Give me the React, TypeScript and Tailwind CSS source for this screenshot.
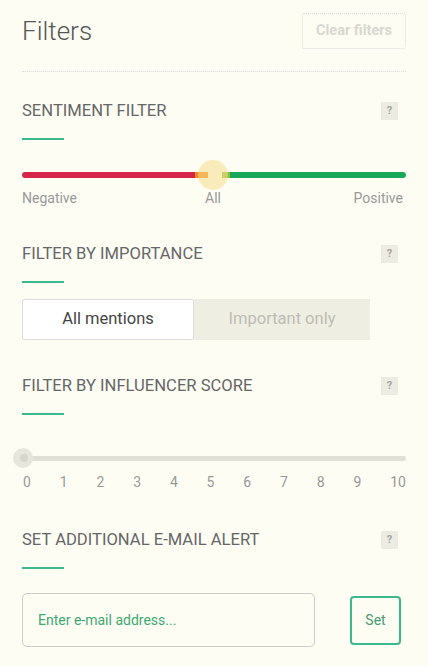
import React from 'react'

const font = { fontFamily: 'Roboto, "Noto Sans", Arial, sans-serif' }

function SectionHead({ title }: { title: string }) {
  return (
    <div>
      <div className="flex h-[20px] items-center justify-between">
        <span className="text-[16.6px] leading-[20px] text-[#666]">{title}</span>
        <span className="mr-[8px] flex h-[18px] w-[17px] items-center justify-center bg-[#ececE2] text-[11px] font-bold text-[#a5a5a0]">?</span>
      </div>
      <div className="mt-[17px] h-[2px] w-[42px] bg-[#3cb88e]" />
    </div>
  )
}

const scores = ['0', '1', '2', '3', '4', '5', '6', '7', '8', '9', '10']

export default function App() {
  return (
    <div className="min-h-[666px] w-[428px] bg-[#fdfdf4] px-[22px] pt-[13px]" style={font}>
      {/* Header */}
      <div className="flex h-[36px] items-center justify-between">
        <h1 className="text-[26px] font-light leading-none text-[#555]">Filters</h1>
        <button className="h-[36px] w-[104px] rounded-[2px] border border-dotted border-[#ddd] text-[14.5px] font-bold text-[#d8d8d0]">
          Clear filters
        </button>
      </div>
      <div className="mt-[22px] border-t border-dotted border-[#ddd]" />

      {/* Sentiment */}
      <div className="mt-[29px]">
        <SectionHead title="SENTIMENT FILTER" />
        <div className="relative mt-[20px] h-[30px]">
          <div className="absolute left-0 top-[12px] flex h-[6px] w-full items-center">
            <div className="h-full w-[173px] rounded-l-full bg-[#d6264b]" />
            <div className="h-full w-[13px] bg-[#f08a1c]" />
            <div className="h-full w-[14px]" />
            <div className="h-full w-[8px] bg-[#8fbf3a]" />
            <div className="h-full flex-1 rounded-r-full bg-[#17a85a]" />
          </div>
          <div className="absolute left-[176px] top-0 h-[30px] w-[30px] rounded-full bg-[#f7df8a]/55" />
        </div>
        <div className="relative h-[16px] text-[14px] leading-[16px] text-[#999]">
          <span className="absolute left-0">Negative</span>
          <span className="absolute left-[183px]">All</span>
          <span className="absolute right-[3px]">Positive</span>
        </div>
      </div>

      {/* Importance */}
      <div className="mt-[38px]">
        <SectionHead title="FILTER BY IMPORTANCE" />
        <div className="mt-[16px] flex h-[41px] w-[348px] text-[16.5px]">
          <button className="w-[172px] rounded-[2px] border border-[#ddd] bg-white text-[#444]">All mentions</button>
          <button className="flex-1 bg-[#eeeee2] text-[#bdbdb5]">Important only</button>
        </div>
      </div>

      {/* Influencer score */}
      <div className="mt-[36px]">
        <SectionHead title="FILTER BY INFLUENCER SCORE" />
        <div className="relative mt-[33px] h-[20px]">
          <div className="absolute left-0 top-[8px] h-[5px] w-full rounded-full bg-[#e0e0d8]" />
          <div className="absolute left-[-9px] top-[0px] h-[20px] w-[20px] rounded-full bg-[#e6e6dc]" />
          <div className="absolute left-[-2px] top-[6px] h-[8px] w-[8px] rounded-full bg-[#d6d6cc]" />
        </div>
        <div className="mt-[6px] flex h-[16px] justify-between pl-[1px] pr-[0px] text-[14px] leading-[16px] text-[#999]">
          {scores.map((s) => (
            <span key={s}>{s}</span>
          ))}
        </div>
      </div>

      {/* Email alert */}
      <div className="mt-[40px]">
        <SectionHead title="SET ADDITIONAL E-MAIL ALERT" />
        <div className="mt-[24px] flex items-center">
          <input
            className="h-[54px] w-[293px] rounded-[5px] border border-[#ccc] bg-transparent px-[15px] text-[14px] outline-none placeholder:text-[#3fa872]"
            placeholder="Enter e-mail address..."
          />
          <button className="ml-[35px] h-[49px] w-[51px] rounded-[4px] border-2 border-[#3cb88e] text-[14px] text-[#4a9a70]">
            Set
          </button>
        </div>
      </div>
    </div>
  )
}
